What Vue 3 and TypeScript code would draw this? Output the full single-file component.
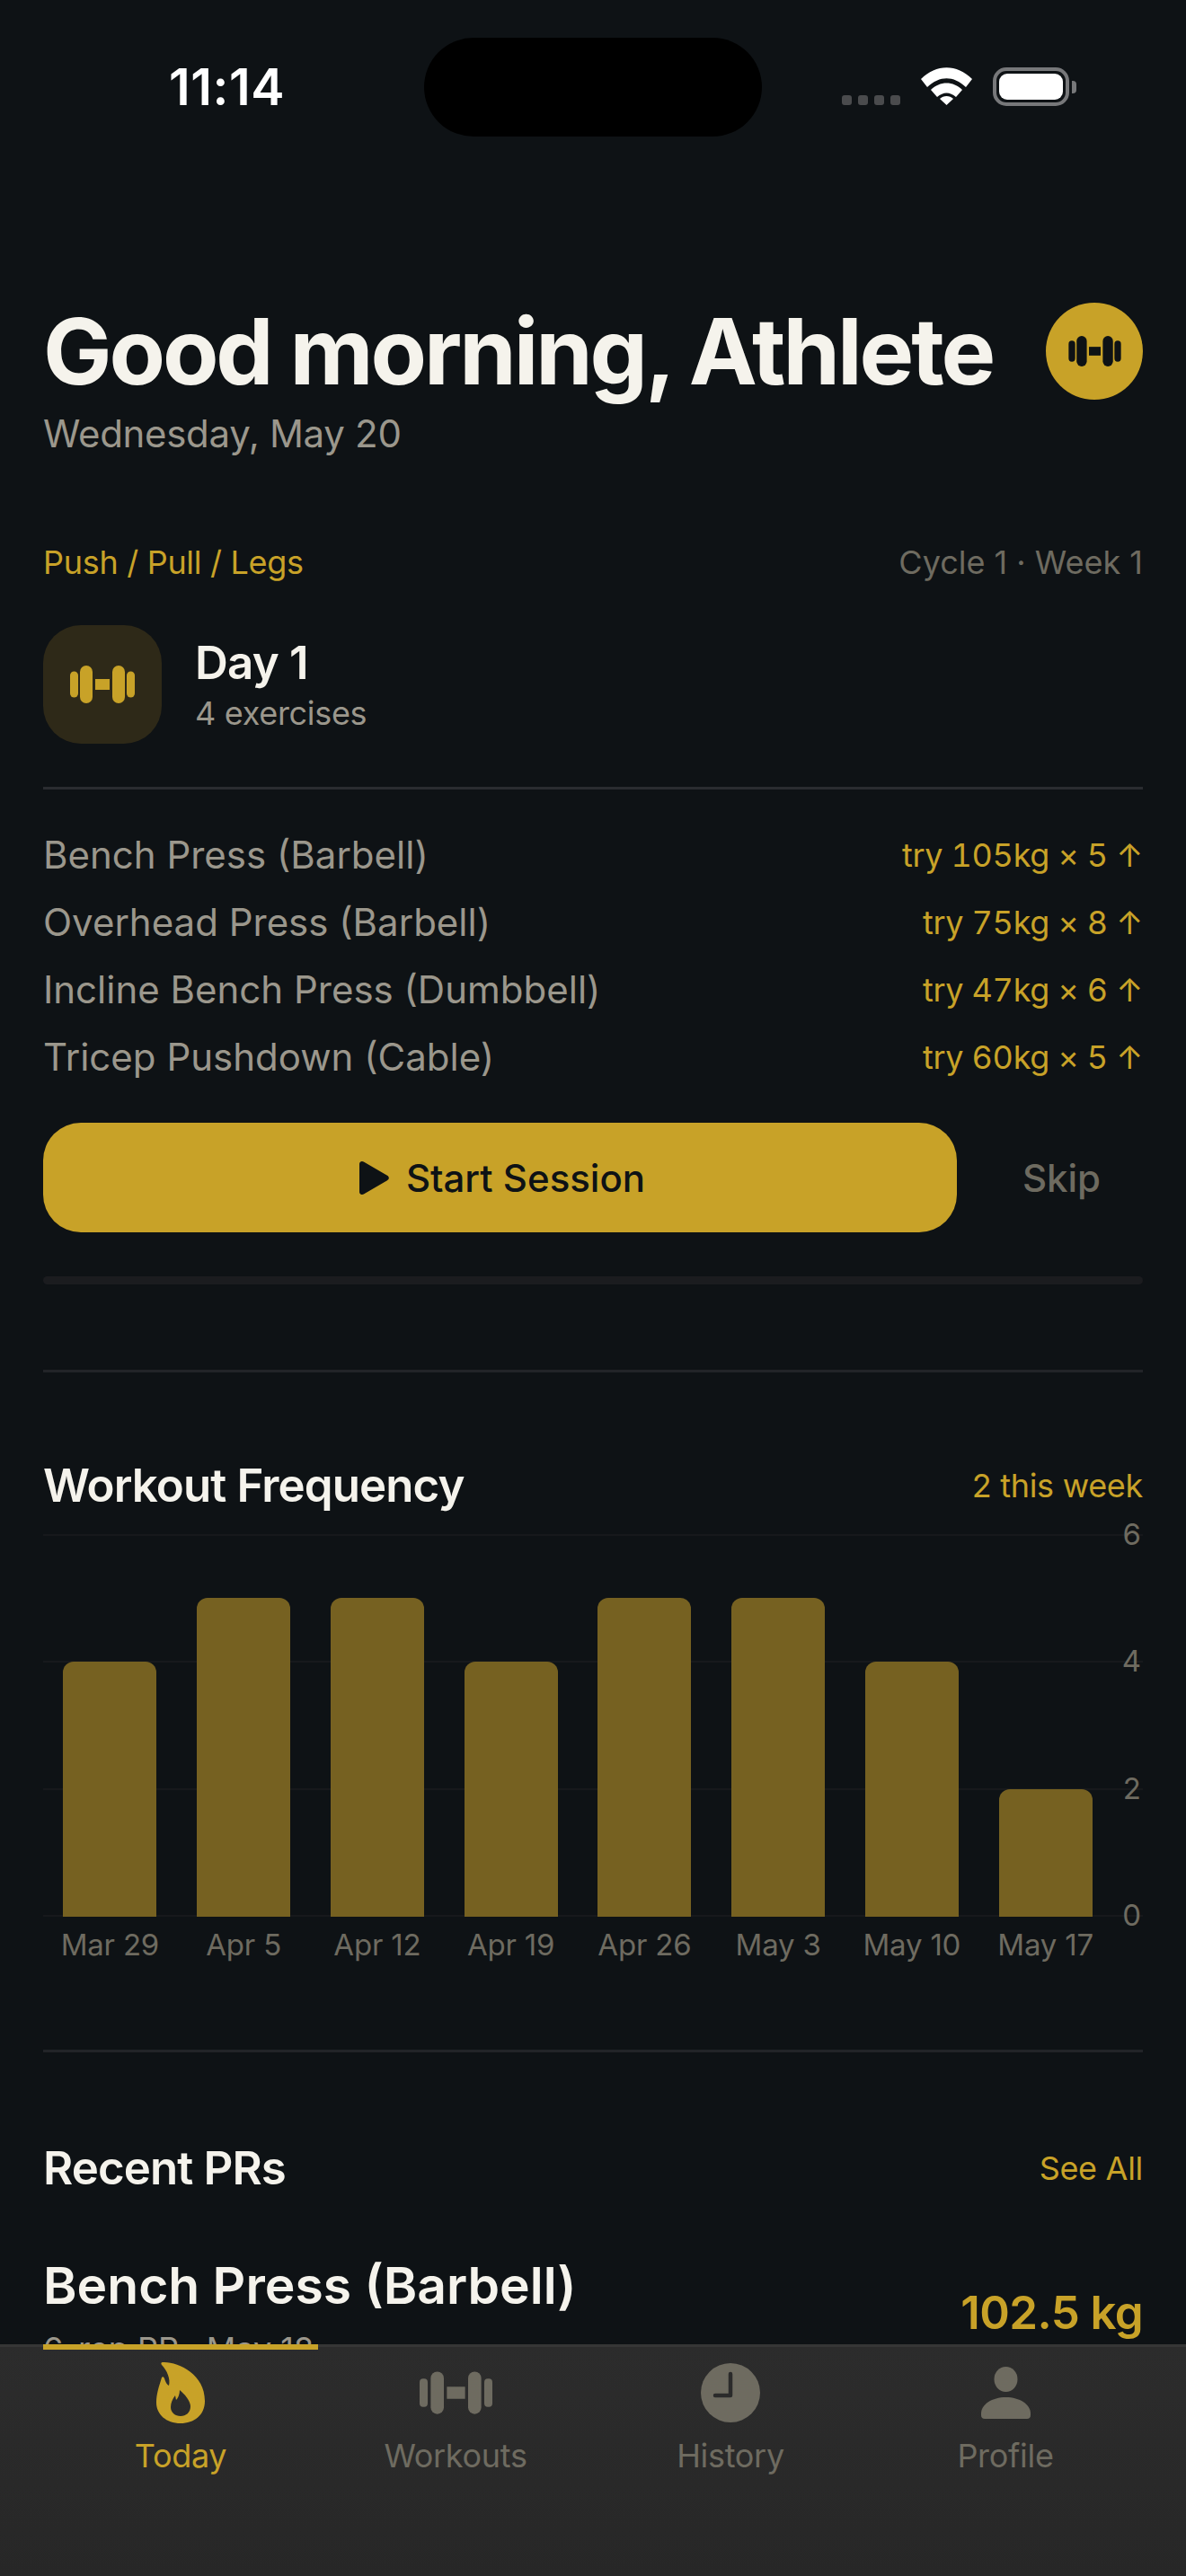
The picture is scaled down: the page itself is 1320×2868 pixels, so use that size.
<script setup lang="ts">
interface Exercise {
  name: string
  hint: string
}

const exercises: Exercise[] = [
  { name: 'Bench Press (Barbell)', hint: 'try 105kg × 5 ↑' },
  { name: 'Overhead Press (Barbell)', hint: 'try 75kg × 8 ↑' },
  { name: 'Incline Bench Press (Dumbbell)', hint: 'try 47kg × 6 ↑' },
  { name: 'Tricep Pushdown (Cable)', hint: 'try 60kg × 5 ↑' }
]

const weeks = [
  { label: 'Mar 29', count: 4 },
  { label: 'Apr 5', count: 5 },
  { label: 'Apr 12', count: 5 },
  { label: 'Apr 19', count: 4 },
  { label: 'Apr 26', count: 5 },
  { label: 'May 3', count: 5 },
  { label: 'May 10', count: 4 },
  { label: 'May 17', count: 2 }
]

const ticks = [6, 4, 2, 0]

function barHeight(count: number) {
  return `${(count / 6) * 426}px`
}
</script>

<template>
  <div class="page">
    <div class="status-bar">
      <span class="time">11:14</span>
      <div class="island"></div>
      <div class="status-icons">
        <div class="signal"><i></i><i></i><i></i><i></i></div>
        <svg class="wifi" viewBox="0 0 57 42">
          <path d="M0 13 C17 -4 40 -4 57 13 L50 22 C36 9 21 9 7 22 Z" fill="#fff" />
          <path d="M11 25 C21 15 36 15 46 25 L39 33 C32 27 25 27 18 33 Z" fill="#fff" />
          <path d="M21 35 C25 31 32 31 36 35 L28.5 42 Z" fill="#fff" />
        </svg>
        <div class="battery"><div class="battery-fill"></div></div>
        <div class="battery-cap"></div>
      </div>
    </div>

    <main class="content">
      <header class="greeting">
        <div>
          <h1 class="title">Good morning, Athlete</h1>
          <p class="date">Wednesday, May 20</p>
        </div>
        <div class="avatar">
          <svg class="bell-sm" viewBox="0 0 72 42" fill="#0e1215">
            <rect x="0" y="6.5" width="9" height="29" rx="4.5" />
            <rect x="11" y="0" width="14" height="42" rx="7" />
            <rect x="28" y="15" width="16" height="12" />
            <rect x="47" y="0" width="14" height="42" rx="7" />
            <rect x="63" y="6.5" width="9" height="29" rx="4.5" />
          </svg>
        </div>
      </header>

      <div class="program-row">
        <span class="program">Push / Pull / Legs</span>
        <span class="cycle">Cycle 1 · Week 1</span>
      </div>

      <div class="day-row">
        <div class="day-icon">
          <svg class="bell-md" viewBox="0 0 72 42" fill="#c8a228">
            <rect x="0" y="6.5" width="9" height="29" rx="4.5" />
            <rect x="11" y="0" width="14" height="42" rx="7" />
            <rect x="28" y="15" width="16" height="12" />
            <rect x="47" y="0" width="14" height="42" rx="7" />
            <rect x="63" y="6.5" width="9" height="29" rx="4.5" />
          </svg>
        </div>
        <div>
          <div class="day-title">Day 1</div>
          <div class="day-sub">4 exercises</div>
        </div>
      </div>

      <div class="divider day-divider"></div>

      <ul class="exercise-list">
        <li v-for="ex in exercises" :key="ex.name" class="exercise">
          <span class="exercise-name">{{ ex.name }}</span>
          <span class="exercise-hint">{{ ex.hint }}</span>
        </li>
      </ul>

      <div class="actions">
        <button class="start-btn">
          <svg class="play" viewBox="0 0 33 37">
            <path d="M0 3 C0 0.5 2.5 -0.8 4.8 0.5 L31 15.8 C33.4 17.2 33.4 19.8 31 21.2 L4.8 36.5 C2.5 37.8 0 36.5 0 34 Z" fill="#0e1215" />
          </svg>
          Start Session
        </button>
        <button class="skip-btn">Skip</button>
      </div>

      <div class="progress-track"></div>

      <div class="divider section-divider"></div>

      <section class="freq">
        <div class="section-head">
          <h2 class="section-title">Workout Frequency</h2>
          <span class="section-link">2 this week</span>
        </div>
        <div class="chart">
          <div class="grid-lines">
            <div v-for="t in ticks" :key="t" class="grid-line">
              <span class="tick">{{ t }}</span>
            </div>
          </div>
          <div class="bars">
            <div v-for="w in weeks" :key="w.label" class="bar-slot">
              <div class="bar" :style="{ height: barHeight(w.count) }"></div>
            </div>
          </div>
        </div>
        <div class="bar-labels">
          <span v-for="w in weeks" :key="w.label">{{ w.label }}</span>
        </div>
      </section>

      <div class="divider pr-divider"></div>

      <section class="prs">
        <div class="section-head">
          <h2 class="section-title">Recent PRs</h2>
          <span class="section-link">See All</span>
        </div>
        <div class="pr-row">
          <div>
            <div class="pr-name">Bench Press (Barbell)</div>
            <div class="pr-sub">6-rep PR · May 18</div>
          </div>
          <div class="pr-value">102.5 kg</div>
        </div>
      </section>
    </main>

    <nav class="tab-bar">
      <div class="tab active">
        <svg class="tab-flame" viewBox="0 0 54 69">
          <path fill-rule="evenodd" fill="#c8a228" d="M7 1 C24 0 54 14 54 44 C54 60 42 69 27 69 C11 69 0 59 0 46 C0 36 3 28 6 18 C7 17 8 17 9 19 C10 23 12 26 14 27 C16 20 12 10 6 4 C5 3 5 1 7 1 Z M26 32 C31 36 38 44 38 50 C38 57 33 61 27 61 C21 61 16 57 16 51 C16 46 18 42 21 38 L22 43 C24 41 26 37 26 32 Z" />
        </svg>
        <span>Today</span>
      </div>
      <div class="tab">
        <svg class="tab-bell" viewBox="0 0 72 42" fill="#6e6b60">
          <rect x="0" y="7" width="8" height="28" rx="3.5" />
          <rect x="11" y="0" width="13" height="42" rx="6.5" />
          <rect x="27" y="15" width="18" height="12" />
          <rect x="48" y="0" width="13" height="42" rx="6.5" />
          <rect x="64" y="7" width="8" height="28" rx="3.5" />
        </svg>
        <span>Workouts</span>
      </div>
      <div class="tab">
        <svg class="tab-clock" viewBox="0 0 66 66">
          <circle cx="33" cy="33" r="33" fill="#6e6b60" />
          <path d="M33 12 V36 H16" fill="none" stroke="#2b2b2b" stroke-width="4.5" stroke-linecap="round" stroke-linejoin="round" />
        </svg>
        <span>History</span>
      </div>
      <div class="tab">
        <svg class="tab-user" viewBox="0 0 55 58" fill="#6e6b60">
          <ellipse cx="27.5" cy="14" rx="13" ry="14" />
          <path d="M0 52 C0 42 12 34 27.5 34 C43 34 55 42 55 52 V54 C55 56.5 53.5 58 51 58 H4 C1.5 58 0 56.5 0 54 Z" />
        </svg>
        <span>Profile</span>
      </div>
    </nav>
  </div>
</template>

<style scoped>
.page {
  position: relative;
  width: 1320px;
  height: 2868px;
  overflow: hidden;
  background: #0e1215;
  color: #f5f3ec;
  font-family: 'Inter', 'Noto Sans', sans-serif;
}

.status-bar {
  position: relative;
  height: 160px;
}

.time {
  position: absolute;
  left: 188px;
  top: 64px;
  font-size: 56px;
  line-height: 66px;
  font-weight: 600;
  color: #fff;
  letter-spacing: 0.6px;
}

.island {
  position: absolute;
  left: 472px;
  top: 42px;
  width: 376px;
  height: 110px;
  border-radius: 55px;
  background: #000;
}

.status-icons {
  position: absolute;
  left: 937px;
  top: 75px;
  display: flex;
  align-items: flex-start;
}

.signal {
  display: flex;
  gap: 7px;
  margin-top: 31px;
}

.signal i {
  display: block;
  width: 11px;
  height: 11px;
  border-radius: 3px;
  background: #4a4b4d;
}

.wifi {
  width: 57px;
  height: 42px;
  margin-left: 23px;
}

.battery {
  width: 85px;
  height: 43px;
  margin-left: 23px;
  box-sizing: border-box;
  border: 4px solid #77787a;
  border-radius: 15px;
  padding: 3px;
}

.battery-fill {
  width: 100%;
  height: 100%;
  border-radius: 9px;
  background: #fff;
}

.battery-cap {
  width: 5px;
  height: 14px;
  margin: 15px 0 0 3px;
  border-radius: 0 4px 4px 0;
  background: #77787a;
}

.content {
  padding: 0 48px;
}

.greeting {
  display: flex;
  justify-content: space-between;
  align-items: flex-start;
  padding-top: 171px;
}

.title {
  margin: 0;
  font-size: 102px;
  line-height: 120px;
  font-weight: 700;
  letter-spacing: -3.1px;
  white-space: nowrap;
}

.date {
  margin: 5px 0 0;
  font-size: 42px;
  line-height: 54px;
  letter-spacing: -0.3px;
  color: #9b978c;
}

.avatar {
  width: 108px;
  height: 108px;
  margin-top: 6px;
  border-radius: 50%;
  background: #c8a228;
  display: flex;
  align-items: center;
  justify-content: center;
}

.bell-sm {
  width: 59px;
  height: 34px;
}

.program-row {
  display: flex;
  justify-content: space-between;
  align-items: center;
  margin-top: 92px;
  height: 48px;
  font-size: 36px;
}

.program {
  color: #c8a228;
  letter-spacing: -0.3px;
}

.cycle {
  color: #6e6b60;
}

.day-row {
  display: flex;
  align-items: center;
  gap: 37px;
  margin-top: 46px;
}

.day-icon {
  width: 132px;
  height: 132px;
  border-radius: 42px;
  background: #2e2918;
  display: flex;
  align-items: center;
  justify-content: center;
}

.bell-md {
  width: 72px;
  height: 42px;
}

.day-title {
  font-size: 51px;
  line-height: 60px;
  font-weight: 600;
  letter-spacing: -0.8px;
}

.day-sub {
  margin-top: 4px;
  font-size: 36px;
  line-height: 44px;
  letter-spacing: -0.3px;
  color: #9b978c;
}

.divider {
  height: 3px;
  background: #2a2c30;
}

.day-divider {
  margin-top: 48px;
}

.exercise-list {
  list-style: none;
  margin: 0;
  padding: 0;
  margin-top: 35px;
}

.exercise {
  display: flex;
  justify-content: space-between;
  align-items: center;
  height: 75px;
}

.exercise-name {
  font-size: 42px;
  color: #9b978c;
}

.exercise-hint {
  font-size: 36px;
  font-variant-numeric: tabular-nums;
  letter-spacing: -0.3px;
  color: #c8a228;
}

.actions {
  display: flex;
  align-items: center;
  margin-top: 36px;
}

.start-btn {
  width: 1017px;
  height: 122px;
  border: 0;
  padding: 0 0 0 5px;
  border-radius: 42px;
  background: #c8a228;
  color: #0e1215;
  font-family: inherit;
  font-size: 42px;
  font-weight: 500;
  display: flex;
  align-items: center;
  justify-content: center;
  gap: 19px;
}

.play {
  width: 33px;
  height: 37px;
}

.skip-btn {
  flex: 1;
  height: 122px;
  border: 0;
  padding: 0 0 0 26px;
  background: none;
  color: #6e6b60;
  font-family: inherit;
  font-size: 42px;
  font-weight: 500;
}

.progress-track {
  height: 9px;
  margin-top: 49px;
  border-radius: 5px;
  background: #1b1c1f;
}

.section-divider {
  margin-top: 95px;
  background: #222428;
}

.freq {
  margin-top: 96px;
}

.section-head {
  display: flex;
  justify-content: space-between;
  align-items: center;
  height: 60px;
}

.section-title {
  margin: 0;
  font-size: 51px;
  line-height: 60px;
  font-weight: 600;
  letter-spacing: -0.9px;
}

.section-link {
  font-size: 36px;
  letter-spacing: -0.3px;
  color: #c8a228;
}

.chart {
  position: relative;
  height: 426px;
  margin-top: 24px;
}

.grid-lines {
  position: absolute;
  inset: 0;
  display: flex;
  flex-direction: column;
  justify-content: space-between;
}

.grid-line {
  position: relative;
  height: 2px;
  background: #17191c;
}

.tick {
  position: absolute;
  right: 2px;
  top: -22px;
  font-size: 33px;
  line-height: 44px;
  color: #6e6b60;
}

.bars {
  position: absolute;
  left: 0;
  bottom: 0;
  width: 1190px;
  height: 100%;
  display: grid;
  grid-template-columns: repeat(8, 1fr);
}

.bar-slot {
  display: flex;
  align-items: flex-end;
  justify-content: center;
}

.bar {
  width: 104px;
  border-radius: 12px 12px 0 0;
  background: #766121;
}

.bar-labels {
  width: 1190px;
  display: grid;
  grid-template-columns: repeat(8, 1fr);
  margin-top: 9px;
  font-size: 33px;
  line-height: 44px;
  letter-spacing: -0.2px;
  color: #6e6b60;
  text-align: center;
}

.pr-divider {
  margin-top: 95px;
  background: #222428;
}

.prs {
  margin-top: 99px;
}

.pr-row {
  display: flex;
  justify-content: space-between;
  margin-top: 67px;
}

.pr-name {
  font-size: 57px;
  line-height: 68px;
  font-weight: 600;
  white-space: nowrap;
}

.pr-sub {
  margin-top: 14px;
  font-size: 36px;
  line-height: 44px;
  color: #9b978c;
}

.pr-value {
  margin-top: 34px;
  font-size: 51px;
  line-height: 60px;
  font-weight: 600;
  letter-spacing: -0.6px;
  color: #c8a228;
}

.tab-bar {
  position: absolute;
  left: 0;
  right: 0;
  bottom: 0;
  height: 258px;
  box-sizing: border-box;
  border-top: 3px solid #363636;
  background: linear-gradient(180deg, #2c2c2c, #272727);
  padding: 0 48px;
  display: grid;
  grid-template-columns: repeat(4, 1fr);
}

.tab {
  position: relative;
  height: 140px;
  display: flex;
  flex-direction: column;
  align-items: center;
  color: #6e6b60;
  font-size: 36px;
  line-height: 44px;
  letter-spacing: -0.3px;
}

.tab span {
  position: absolute;
  top: 99px;
}

.tab svg {
  position: absolute;
}

.tab.active {
  color: #c8a228;
}

.tab.active::before {
  content: '';
  position: absolute;
  left: 0;
  right: 0;
  top: -3px;
  height: 6px;
  background: #c8a228;
}

.tab-flame {
  top: 16px;
  width: 54px;
  height: 69px;
}

.tab-bell {
  top: 27px;
  width: 81px;
  height: 48px;
}

.tab-clock {
  top: 18px;
  width: 66px;
  height: 66px;
}

.tab-user {
  top: 22px;
  width: 55px;
  height: 58px;
}
</style>

<style>
html,
body {
  margin: 0;
  background: #0e1215;
}
</style>
